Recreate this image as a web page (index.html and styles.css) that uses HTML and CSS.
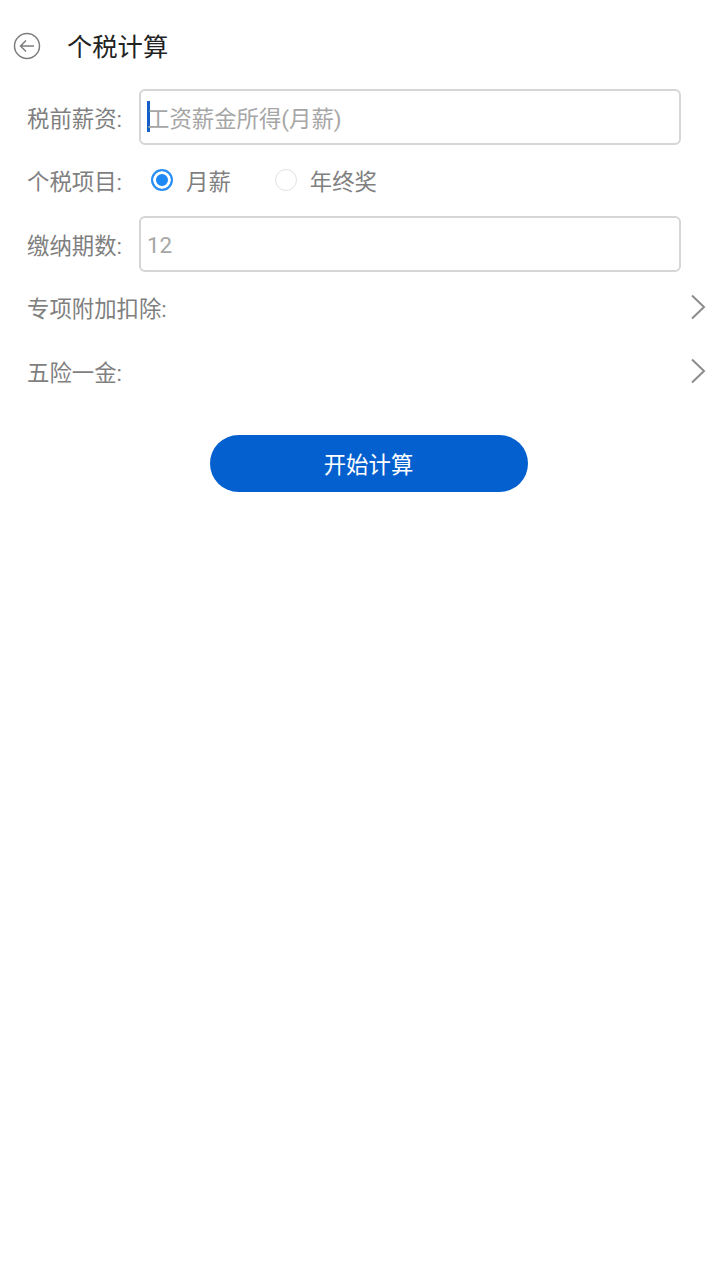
FILE: index.html
```html
<!DOCTYPE html>
<html lang="zh-CN">
<head>
  <meta charset="UTF-8">
  <meta name="viewport" content="width=device-width, initial-scale=1.0">
  <title>个税计算</title>
  <link rel="stylesheet" href="styles.css">
</head>
<body>
  <div class="header">
    <svg class="back-icon" viewBox="0 0 28 28" fill="none" stroke="#7d7d7d" stroke-width="1.5">
      <circle cx="14" cy="14" r="12.5"/>
      <path d="M21 14H7.5M13 8.5L7.5 14l5.500 5.500"/>
    </svg>
    <h1 class="title">个税计算</h1>
  </div>

  <div class="form">
    <div class="row">
      <span class="label">税前薪资:</span>
      <div class="input">
        <span class="caret"></span>
        <span class="placeholder">工资薪金所得(月薪)</span>
      </div>
    </div>

    <div class="row">
      <span class="label">个税项目:</span>
      <div class="radio-group">
        <span class="radio checked"></span>
        <span class="radio-text">月薪</span>
        <span class="radio"></span>
        <span class="radio-text">年终奖</span>
      </div>
    </div>

    <div class="row">
      <span class="label">缴纳期数:</span>
      <div class="input">
        <span class="placeholder number">12</span>
      </div>
    </div>

    <div class="row link-row">
      <span class="link-label">专项附加扣除:</span>
      <svg class="arrow" viewBox="0 0 16 26" fill="none" stroke="#8c8c8c" stroke-width="2">
        <path d="M2 1.500L14 13 2 24.500"/>
      </svg>
    </div>

    <div class="row link-row">
      <span class="link-label">五险一金:</span>
      <svg class="arrow" viewBox="0 0 16 26" fill="none" stroke="#8c8c8c" stroke-width="2">
        <path d="M2 1.500L14 13 2 24.500"/>
      </svg>
    </div>
  </div>

  <div class="actions">
    <button class="submit">开始计算</button>
  </div>
</body>
</html>
```

FILE: styles.css
```css
body {
  font-family: "Roboto", "Noto Sans CJK SC", sans-serif;
  margin: 0;
  padding: 0;
  background-color: #fff;
  color: #7f7f7f;
}

.header {
  display: flex;
  align-items: center;
  height: 28px;
  padding: 32px 0 0 13px;
}

.back-icon {
  width: 28px;
  height: 28px;
}

.title {
  margin: -2px 0 0 26px;
  font-size: 25.3px;
  font-weight: 400;
  color: #222;
}

.form {
  padding: 28.500px 14px 0 27px;
}

.row {
  display: flex;
  align-items: center;
  height: 56px;
  margin-bottom: 7.500px;
}

.label {
  width: 112px;
  flex-shrink: 0;
  font-size: 22.4px;
  color: #7f7f7f;
}

.link-label {
  font-size: 22.4px;
  color: #7f7f7f;
}

.input {
  display: flex;
  align-items: center;
  box-sizing: border-box;
  width: 542px;
  height: 56px;
  padding-left: 6px;
  border: 2px solid #d6d6d6;
  border-radius: 6px;
  font-size: 22.4px;
  color: #a6a6a6;
}

.number {
  padding-top: 2px;
}

.caret {
  width: 3px;
  height: 31px;
  margin-right: -3px;
  background-color: #1560c8;
}

.radio-group {
  display: flex;
  align-items: center;
  padding-left: 12px;
}

.radio {
  box-sizing: border-box;
  width: 22px;
  height: 22px;
  border: 1.500px solid #e2e2e2;
  border-radius: 50%;
}

.radio.checked {
  border: 2px solid #2b8ff5;
  background-color: #1e88f5;
  box-shadow: inset 0 0 0 3px #fff;
}

.radio-text {
  margin: 0 44px 0 13px;
  font-size: 22.4px;
  color: #7f7f7f;
}

.link-row {
  justify-content: space-between;
}

.arrow {
  width: 16px;
  height: 26px;
}

.actions {
  display: flex;
  justify-content: center;
  padding: 28.500px 0 0 17px;
}

.submit {
  width: 318px;
  height: 57px;
  border: none;
  border-radius: 29px;
  background-color: #0560cf;
  color: #fff;
  font-family: inherit;
  font-size: 22.4px;
}
```
